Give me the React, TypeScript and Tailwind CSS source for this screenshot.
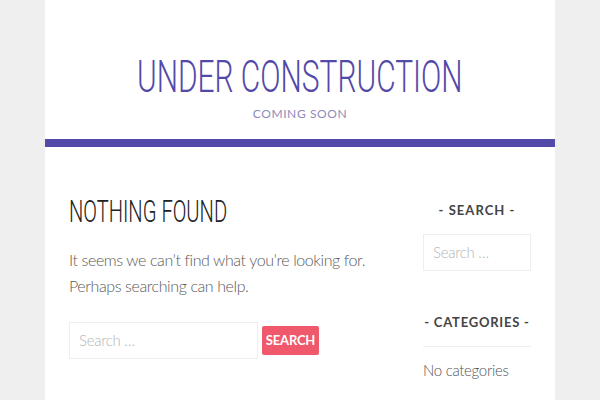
import React from "react";

const heading = "font-['Roboto','DejaVu_Sans',sans-serif] font-light";
const body = "font-['Lato','Liberation_Sans',sans-serif]";

function SearchBox({ className }: { className?: string }) {
  return (
    <div
      className={`flex items-center border border-[#eeeeee] px-[9px] text-[15px] font-light tracking-[-0.3px] text-[#b5b5b5] ${className ?? ""}`}
    >
      Search …
    </div>
  );
}

export default function App() {
  return (
    <div className={`min-h-screen bg-[#efefef] flex justify-center ${body}`}>
      <div className="w-[510px] bg-white">
        <header className="h-[139px] flex flex-col items-center pt-[53px]">
          <h1 className={`whitespace-nowrap text-[45px] leading-[48px] text-[#524aa8] scale-x-[0.665] ${heading}`}>
            UNDER CONSTRUCTION
          </h1>
          <p className="mt-[4px] text-[12px] tracking-[0.05em] text-[#8e8bbb]">COMING SOON</p>
        </header>
        <div className="h-2 bg-[#524aa8]" />

        <div className="flex px-6 pt-[48px] pb-8">
          <main className="w-[310px]">
            <h2 className={`origin-left whitespace-nowrap text-[31px] leading-[34px] text-[#222] scale-x-[0.65] ${heading}`}>
              NOTHING FOUND
            </h2>
            <p className="mt-[18px] text-[16px] leading-[26px] font-light tracking-[-0.4px] text-[#5a5a5a]">
              It seems we can’t find what you’re looking for. Perhaps searching can help.
            </p>
            <div className="mt-[23px] flex items-center gap-1">
              <SearchBox className="w-[189px] h-[37px]" />
              <button className="h-[29px] w-[57px] rounded-[2px] bg-[#f0586c] text-[13px] font-bold tracking-[-0.2px] text-white">
                SEARCH
              </button>
            </div>
          </main>

          <aside className="ml-auto w-[108px] flex flex-col">
            <h3 className="mt-[6px] whitespace-nowrap text-center text-[13px] font-bold tracking-[0.08em] text-[#444]">
              - SEARCH -
            </h3>
            <SearchBox className="mt-[13px] h-[37px] w-full" />
            <h3 className="mt-[42px] whitespace-nowrap text-center text-[13px] font-bold tracking-[0.06em] text-[#444]">
              - CATEGORIES -
            </h3>
            <div className="mt-[14px] border-t border-[#eeeeee]" />
            <p className="mt-[12px] text-[15px] font-light tracking-[-0.3px] text-[#555]">No categories</p>
          </aside>
        </div>
      </div>
    </div>
  );
}
